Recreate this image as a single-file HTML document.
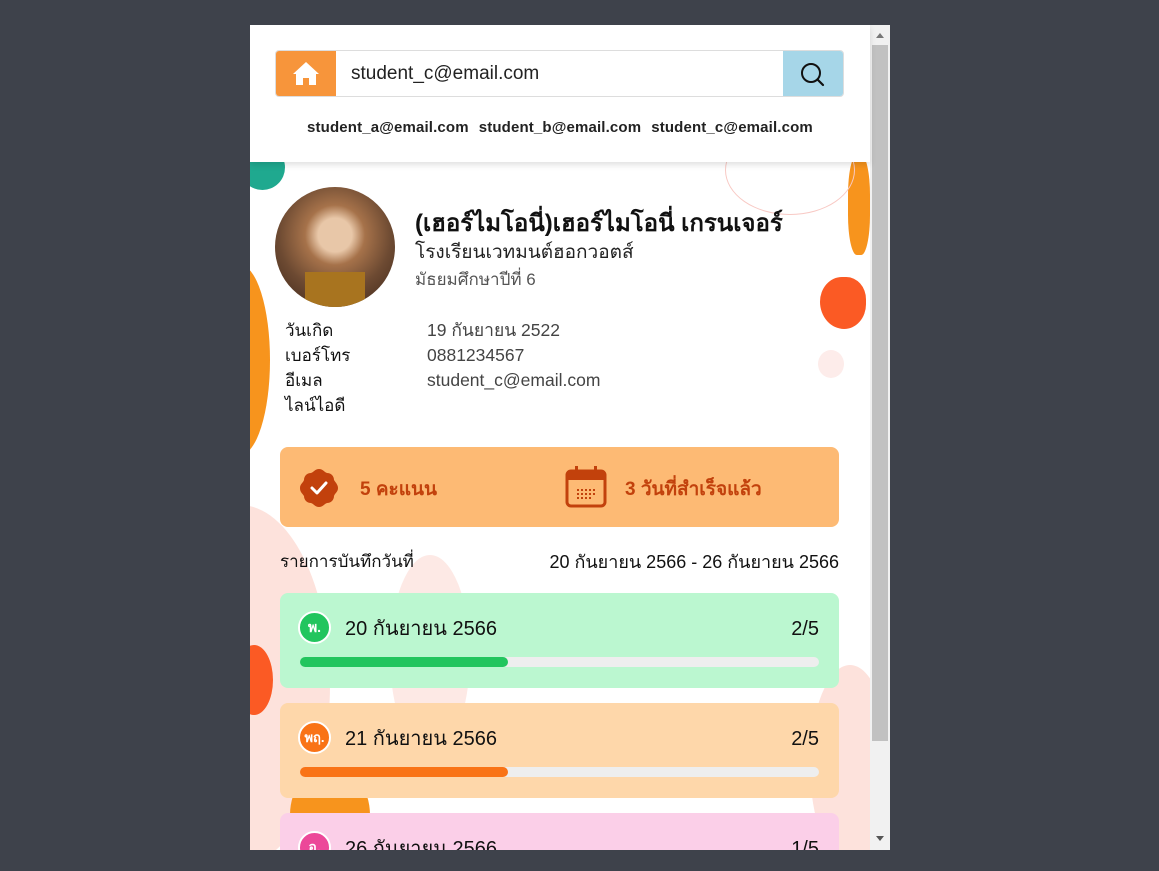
<!DOCTYPE html>
<html><head><meta charset="utf-8"><style>
*{box-sizing:border-box;margin:0;padding:0}
body{width:1159px;height:871px;background:#3e424b;position:relative;overflow:hidden;font-family:"Liberation Sans","Noto Sans CJK SC",sans-serif;color:#111}
.win{position:absolute;left:250px;top:25px;width:640px;height:825px;background:#fff;overflow:hidden}
.sb{position:absolute;right:0;top:0;width:20px;height:825px;background:#f1f1f1}
.thumb{position:absolute;left:2px;top:20px;width:16px;height:696px;background:#c1c1c1}
.hdr{position:absolute;left:0;top:0;width:620px;height:137px;background:#fff;box-shadow:0 3px 6px rgba(0,0,0,.12);z-index:3}
.bar{position:absolute;left:25px;top:25px;width:569px;height:47px;border:1px solid #ddd;border-radius:4px;overflow:hidden;background:#fff}
.home{position:absolute;left:0;top:0;width:60px;height:47px;background:#f7953b}
.srch{position:absolute;right:0;top:0;width:60px;height:47px;background:#a6d6e8}
.q{position:absolute;left:75px;top:12px;font-size:19px;color:#222}
.links{position:absolute;left:57px;top:94px;font-size:15px;font-weight:bold;color:#222;white-space:nowrap;letter-spacing:0.15px}
.links span{margin-right:10px}
.blob{position:absolute;border-radius:50%}
.t{position:absolute;white-space:nowrap;line-height:24px}
.card{position:absolute;left:30px;width:559px;border-radius:8px;overflow:hidden}
.badge{position:absolute;left:18px;top:18px;width:33px;height:33px;border-radius:50%;border:2px solid #fff;color:#fff;font-size:14px;font-weight:bold;text-align:center;line-height:29px}
.prog{position:absolute;left:20px;top:64px;width:519px;height:10px;border-radius:5px;background:#eee}
.prog div{height:10px;width:208px;border-radius:5px}
</style></head><body>
<div class="win">
<div class="blob" style="left:-10px;top:120px;width:45px;height:45px;background:#1fa98f"></div>
<div class="blob" style="left:-40px;top:240px;width:60px;height:190px;background:#f7941d"></div>
<div class="blob" style="left:598px;top:130px;width:22px;height:100px;background:#f7941d;border-radius:40%"></div>
<div class="blob" style="left:570px;top:252px;width:46px;height:52px;background:#fb5a24;border-radius:50% 45% 50% 55%"></div>
<div class="blob" style="left:568px;top:325px;width:26px;height:28px;background:#fdecea"></div>
<div class="blob" style="left:-100px;top:480px;width:180px;height:360px;background:#fde2dc"></div>
<div class="blob" style="left:-15px;top:620px;width:38px;height:70px;background:#fb5a24"></div>
<div class="blob" style="left:140px;top:530px;width:80px;height:200px;background:#fde9e5"></div>
<div class="blob" style="left:560px;top:640px;width:80px;height:200px;background:#fde2dc"></div>
<div class="blob" style="left:40px;top:740px;width:80px;height:100px;background:#f7941d"></div>
<div class="blob" style="left:475px;top:100px;width:130px;height:90px;border:1px solid #f8c9c4;background:transparent"></div>

<div class="hdr">
 <div class="bar">
  <div class="home"><svg width="60" height="47" viewBox="0 0 60 47"><path d="M30 11 L17 23 L20 23 L20 34 L27 34 L27 27 L33 27 L33 34 L40 34 L40 23 L43 23 Z" fill="#fff"/></svg></div>
  <div class="q">student_c@email.com</div>
  <div class="srch"><svg width="60" height="47" viewBox="0 0 60 47"><circle cx="28" cy="22" r="9" fill="none" stroke="#111" stroke-width="2"/><path d="M34.5 28.5 L40 34" stroke="#111" stroke-width="2.2" stroke-linecap="round"/></svg></div>
 </div>
 <div class="links"><span>student_a@email.com</span><span>student_b@email.com</span><span>student_c@email.com</span></div>
</div>

<div class="blob" style="left:25px;top:162px;width:120px;height:120px;background:radial-gradient(circle at 50% 40%,#e8c7a8 0 18%,#a6724a 32%,#6d4a32 60%,#3a2418 100%);overflow:hidden"><div style="position:absolute;left:30px;top:85px;width:60px;height:40px;background:#a8741f"></div></div>
<div class="t" style="left:165px;top:185px;font-size:24px;font-weight:bold;line-height:28px">(เฮอร์ไมโอนี่)เฮอร์ไมโอนี่ เกรนเจอร์</div>
<div class="t" style="left:165px;top:216px;font-size:19px;color:#222">โรงเรียนเวทมนต์ฮอกวอตส์</div>
<div class="t" style="left:165px;top:243px;font-size:17px;color:#555">มัธยมศึกษาปีที่ 6</div>
<div class="t" style="left:35px;top:293px;font-size:17px;line-height:25px;color:#111">วันเกิด<br>เบอร์โทร<br>อีเมล<br>ไลน์ไอดี</div>
<div class="t" style="left:177px;top:293px;font-size:17.5px;line-height:25px;color:#444">19 กันยายน 2522<br>0881234567<br>student_c@email.com</div>

<div class="card" style="top:422px;height:80px;background:#fdba74">
 <svg style="position:absolute;left:18px;top:20px" width="42" height="42" viewBox="0 0 42 42"><path d="M21 2 C25 2 26 5 29 6 C33 6 36 9 36 13 C38 16 40 18 40 21 C40 25 37 26 36 29 C36 33 33 36 29 36 C26 37 25 40 21 40 C17 40 16 37 13 36 C9 36 6 33 6 29 C4 26 2 25 2 21 C2 17 5 16 6 13 C6 9 9 6 13 6 C16 5 17 2 21 2Z" fill="#c2410c"/><path d="M14 21 L19 26 L28 16" stroke="#fff" stroke-width="3" fill="none" stroke-linecap="round" stroke-linejoin="round"/></svg>
 <div class="t" style="left:80px;top:31px;font-size:19px;font-weight:bold;color:#c2410c">5 คะแนน</div>
 <svg style="position:absolute;left:284px;top:18px" width="44" height="44" viewBox="0 0 44 44"><rect x="3" y="6" width="38" height="35" rx="4" fill="none" stroke="#c2410c" stroke-width="3"/><rect x="3" y="6" width="38" height="9" fill="#c2410c"/><rect x="11" y="1" width="3" height="8" fill="#c2410c"/><rect x="30" y="1" width="3" height="8" fill="#c2410c"/><g fill="#c2410c"><rect x="13" y="24" width="2" height="2"/><rect x="17" y="24" width="2" height="2"/><rect x="21" y="24" width="2" height="2"/><rect x="25" y="24" width="2" height="2"/><rect x="29" y="24" width="2" height="2"/><rect x="13" y="28" width="2" height="2"/><rect x="17" y="28" width="2" height="2"/><rect x="21" y="28" width="2" height="2"/><rect x="25" y="28" width="2" height="2"/><rect x="29" y="28" width="2" height="2"/><rect x="13" y="32" width="2" height="2"/><rect x="17" y="32" width="2" height="2"/><rect x="21" y="32" width="2" height="2"/><rect x="25" y="32" width="2" height="2"/></g></svg>
 <div class="t" style="left:345px;top:31px;font-size:19px;font-weight:bold;color:#c2410c">3 วันที่สำเร็จแล้ว</div>
</div>

<div class="t" style="left:30px;top:525px;font-size:17px">รายการบันทึกวันที่</div>
<div class="t" style="right:51px;top:525px;font-size:18px">20 กันยายน 2566 - 26 กันยายน 2566</div>

<div class="card" style="top:568px;height:95px;background:#bbf7d0">
 <div class="badge" style="background:#22c55e">พ.</div>
 <div class="t" style="left:65px;top:24px;font-size:20px">20 กันยายน 2566</div>
 <div class="t" style="right:20px;top:24px;font-size:20px">2/5</div>
 <div class="prog"><div style="background:#22c55e"></div></div>
</div>
<div class="card" style="top:678px;height:95px;background:#fed7aa">
 <div class="badge" style="background:#f97316;font-size:13px">พฤ.</div>
 <div class="t" style="left:65px;top:24px;font-size:20px">21 กันยายน 2566</div>
 <div class="t" style="right:20px;top:24px;font-size:20px">2/5</div>
 <div class="prog"><div style="background:#f97316"></div></div>
</div>
<div class="card" style="top:788px;height:95px;background:#fbcfe8">
 <div class="badge" style="background:#ec4899">อ.</div>
 <div class="t" style="left:65px;top:24px;font-size:20px">26 กันยายน 2566</div>
 <div class="t" style="right:20px;top:24px;font-size:20px">1/5</div>
</div>

<div class="sb"><div class="thumb"></div>
<div style="position:absolute;left:6px;top:8px;border:4px solid transparent;border-bottom:5px solid #777;border-top:0"></div>
<div style="position:absolute;left:6px;top:811px;border:4px solid transparent;border-top:5px solid #555;border-bottom:0"></div>
</div>
</div>
</body></html>
